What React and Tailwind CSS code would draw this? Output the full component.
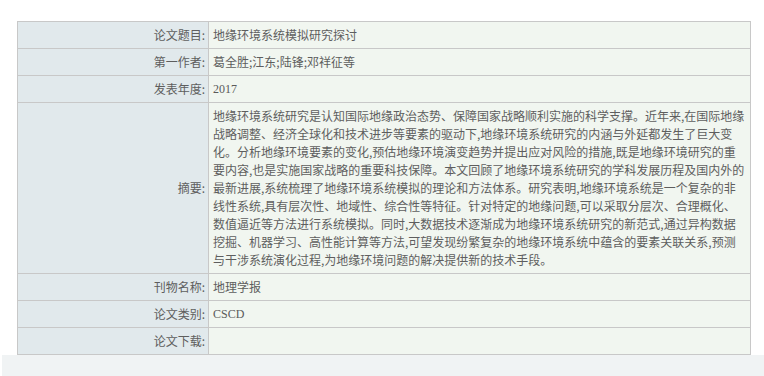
import React from "react";

const font = { fontFamily: '"Noto Sans CJK SC", "Liberation Sans", sans-serif' };

const abstractLines = [
  "地缘环境系统研究是认知国际地缘政治态势、保障国家战略顺利实施的科学支撑。近年来,在国际地缘",
  "战略调整、经济全球化和技术进步等要素的驱动下,地缘环境系统研究的内涵与外延都发生了巨大变",
  "化。分析地缘环境要素的变化,预估地缘环境演变趋势并提出应对风险的措施,既是地缘环境研究的重",
  "要内容,也是实施国家战略的重要科技保障。本文回顾了地缘环境系统研究的学科发展历程及国内外的",
  "最新进展,系统梳理了地缘环境系统模拟的理论和方法体系。研究表明,地缘环境系统是一个复杂的非",
  "线性系统,具有层次性、地域性、综合性等特征。针对特定的地缘问题,可以采取分层次、合理概化、",
  "数值逼近等方法进行系统模拟。同时,大数据技术逐渐成为地缘环境系统研究的新范式,通过异构数据",
  "挖掘、机器学习、高性能计算等方法,可望发现纷繁复杂的地缘环境系统中蕴含的要素关联关系,预测",
  "与干涉系统演化过程,为地缘环境问题的解决提供新的技术手段。",
];

function Row({ label, children, first, tall }) {
  return (
    <div className={`flex ${first ? "" : "border-t border-[#c8c8c8]"}`}>
      <div className={`w-[191px] shrink-0 border-r border-[#c8c8c8] bg-[#e1e9ec] flex items-center justify-end pr-[3px] text-[12px] text-[#5e5e5e] ${tall ? "" : "h-[26px]"}`}>
        {label}
      </div>
      <div className={`flex-1 bg-[#f1f6f0] pl-[4px] text-[12px] text-[#5e5e5e] ${tall ? "py-[4px] leading-[18px]" : "h-[26px] flex items-center"}`}>
        {children}
      </div>
    </div>
  );
}

export default function App() {
  return (
    <div className="w-[764px] h-[376px] bg-white overflow-hidden" style={font}>
      <div className="pt-[21px] pl-[17px]">
        <div className="w-[734px] border border-[#c8c8c8]">
          <Row label="论文题目:" first>地缘环境系统模拟研究探讨</Row>
          <Row label="第一作者:">葛全胜;江东;陆锋;邓祥征等</Row>
          <Row label="发表年度:">
            <span className="text-[12px] text-[#5a5a5a]" style={{ fontFamily: '"Liberation Serif", serif' }}>2017</span>
          </Row>
          <Row label="摘要:" tall>
            {abstractLines.map((l, i) => (
              <div key={i} className="whitespace-nowrap">{l}</div>
            ))}
          </Row>
          <Row label="刊物名称:">地理学报</Row>
          <Row label="论文类别:">
            <span className="text-[12px] text-[#5a5a5a]" style={{ fontFamily: '"Liberation Serif", serif' }}>CSCD</span>
          </Row>
          <Row label="论文下载:"></Row>
        </div>
      </div>
      <div className="ml-[2px] h-[30px] bg-[#f0f3f4]"></div>
    </div>
  );
}
